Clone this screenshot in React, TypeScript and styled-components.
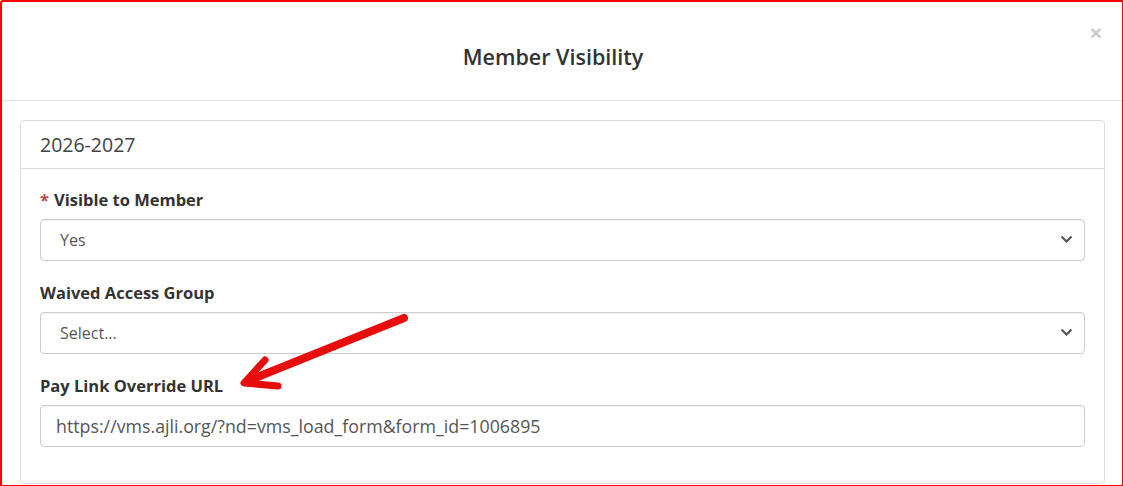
import React from "react";
import styled, { createGlobalStyle } from "styled-components";

const GlobalStyle = createGlobalStyle`
  html, body {
    margin: 0;
    padding: 0;
    background: #fff;
  }
  body {
    font-family: "Open Sans", "Noto Sans", sans-serif;
    color: #333;
  }
`;

const Frame = styled.div`
  position: relative;
  box-sizing: border-box;
  width: 1123px;
  height: 486px;
  overflow: hidden;
  border-style: solid;
  border-color: #ff0000;
  border-width: 2px 1px 1px 2px;
  border-top-left-radius: 3px;
  background: #fff;
  display: flex;
  flex-direction: column;
`;

const Header = styled.div`
  position: relative;
  height: 99px;
  border-bottom: 1px solid #e5e5e5;
  display: flex;
  align-items: center;
  justify-content: center;
  padding: 10px 18px 0 0;
  box-sizing: border-box;
`;

const Title = styled.h4`
  margin: 0;
  font-size: 21.5px;
  font-weight: 600;
  color: #333;
`;

const Close = styled.button`
  position: absolute;
  top: 20px;
  right: 20px;
  border: 0;
  background: none;
  padding: 0;
  font-family: "Liberation Sans", Arial, sans-serif;
  font-size: 21px;
  font-weight: 700;
  line-height: 1;
  color: #cbcbcb;
  cursor: pointer;
`;

const Body = styled.div`
  padding: 19px 17px 0 18px;
  flex: 1;
`;

const Panel = styled.div`
  border: 1px solid #ddd;
  border-radius: 4px;
  height: 364px;
  box-sizing: border-box;
`;

const PanelHeading = styled.div`
  height: 48px;
  box-sizing: border-box;
  border-bottom: 1px solid #ddd;
  padding: 0 19px;
  display: flex;
  align-items: center;
  font-size: 19.5px;
  color: #444;
`;

const PanelBody = styled.div`
  padding: 19px 19px 0 19px;
`;

const FormGroup = styled.div`
  margin-bottom: 20px;
`;

const Label = styled.label`
  display: block;
  font-size: 16.5px;
  font-weight: 700;
  line-height: 24px;
  margin-bottom: 7px;
  color: #333;
`;

const Required = styled.span`
  color: #b94a48;
  margin-right: 5px;
  font-weight: 700;
`;

const SelectWrap = styled.div`
  position: relative;
`;

const Select = styled.select`
  appearance: none;
  -webkit-appearance: none;
  width: 100%;
  height: 42px;
  box-sizing: border-box;
  border: 1px solid #ccc;
  border-radius: 4px;
  background: #fff;
  padding: 0 40px 0 19px;
  font-family: inherit;
  font-size: 16px;
  color: #555;
  box-shadow: inset 0 1px 1px rgba(0, 0, 0, 0.06);
`;

const Chevron = styled.svg`
  position: absolute;
  right: 12px;
  top: 16px;
  pointer-events: none;
`;

const Input = styled.input`
  width: 100%;
  height: 42px;
  box-sizing: border-box;
  border: 1px solid #ccc;
  border-radius: 4px;
  padding: 0 15px;
  font-family: inherit;
  font-size: 17.8px;
  color: #555;
  box-shadow: inset 0 1px 1px rgba(0, 0, 0, 0.06);
`;

const Arrow = styled.svg`
  position: absolute;
  left: -2px;
  top: -2px;
  pointer-events: none;
`;

const SelectField = ({ value }: { value: string }) => (
  <SelectWrap>
    <Select defaultValue={value}>
      <option>{value}</option>
    </Select>
    <Chevron width="13" height="9" viewBox="0 0 13 9">
      <path d="M1.5 1.5 L6.5 6.5 L11.5 1.5" fill="none" stroke="#555" strokeWidth="2.2" />
    </Chevron>
  </SelectWrap>
);

export default function App() {
  return (
    <>
      <GlobalStyle />
      <Frame>
        <Header>
          <Title>Member Visibility</Title>
          <Close aria-label="Close">×</Close>
        </Header>
        <Body>
          <Panel>
            <PanelHeading>2026-2027</PanelHeading>
            <PanelBody>
              <FormGroup>
                <Label>
                  <Required>*</Required>Visible to Member
                </Label>
                <SelectField value="Yes" />
              </FormGroup>
              <FormGroup>
                <Label>Waived Access Group</Label>
                <SelectField value="Select..." />
              </FormGroup>
              <FormGroup>
                <Label>Pay Link Override URL</Label>
                <Input defaultValue="https://vms.ajli.org/?nd=vms_load_form&form_id=1006895" />
              </FormGroup>
            </PanelBody>
          </Panel>
        </Body>
        <Arrow width="1123" height="486" viewBox="0 0 1123 486">
          <g stroke="#e80c0c" fill="none" strokeLinecap="round" strokeLinejoin="round">
            <path d="M404 318 L250 380" strokeWidth="8" />
            <path d="M265 360 L244 383 L278 386" strokeWidth="7" />
          </g>
        </Arrow>
      </Frame>
    </>
  );
}
